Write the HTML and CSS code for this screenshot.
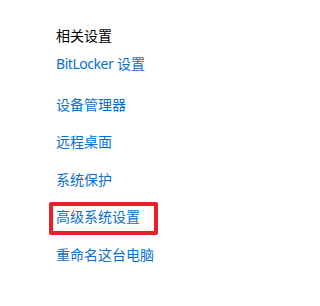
FILE: index.html
```html
<!DOCTYPE html>
<html lang="zh-CN">
<head>
<meta charset="utf-8">
<link rel="stylesheet" href="styles.css">
</head>
<body>
<section class="related">
  <h2 class="title">相关设置</h2>
  <nav class="links">
    <a class="link first" href="#"><span class="latin">BitLocker</span> 设置</a>
    <a class="link" href="#">设备管理器</a>
    <a class="link" href="#">远程桌面</a>
    <a class="link" href="#">系统保护</a>
    <a class="link highlight" href="#">高级系统设置</a>
    <a class="link" href="#">重命名这台电脑</a>
  </nav>
</section>
</body>
</html>
```
FILE: styles.css
```css
html, body {
  margin: 0;
  padding: 0;
  background: #ffffff;
}
body {
  width: 232px;
  height: 306px;
  overflow: hidden;
  font-family: "Segoe UI", "Noto Sans", "Noto Sans CJK SC", sans-serif;
  font-size: 14px;
}
.related {
  padding: 26px 0 0 56px;
}
.title {
  margin: 0 0 8px 0;
  font-size: 14px;
  font-weight: normal;
  line-height: 20px;
  color: #000000;
}
.links {
  display: flex;
  flex-direction: column;
  align-items: flex-start;
  gap: 17.5px;
}
.link {
  line-height: 20px;
  color: #0b6fcf;
  text-decoration: none;
}
.link.first {
  margin-bottom: 3px;
}
.latin {
  letter-spacing: -0.45px;
}
.highlight {
  position: relative;
}
.highlight::after {
  content: "";
  position: absolute;
  left: -7px;
  top: -5px;
  width: 109px;
  height: 33px;
  box-sizing: border-box;
  border: 4px solid #e8202b;
  border-radius: 2px;
}
```
